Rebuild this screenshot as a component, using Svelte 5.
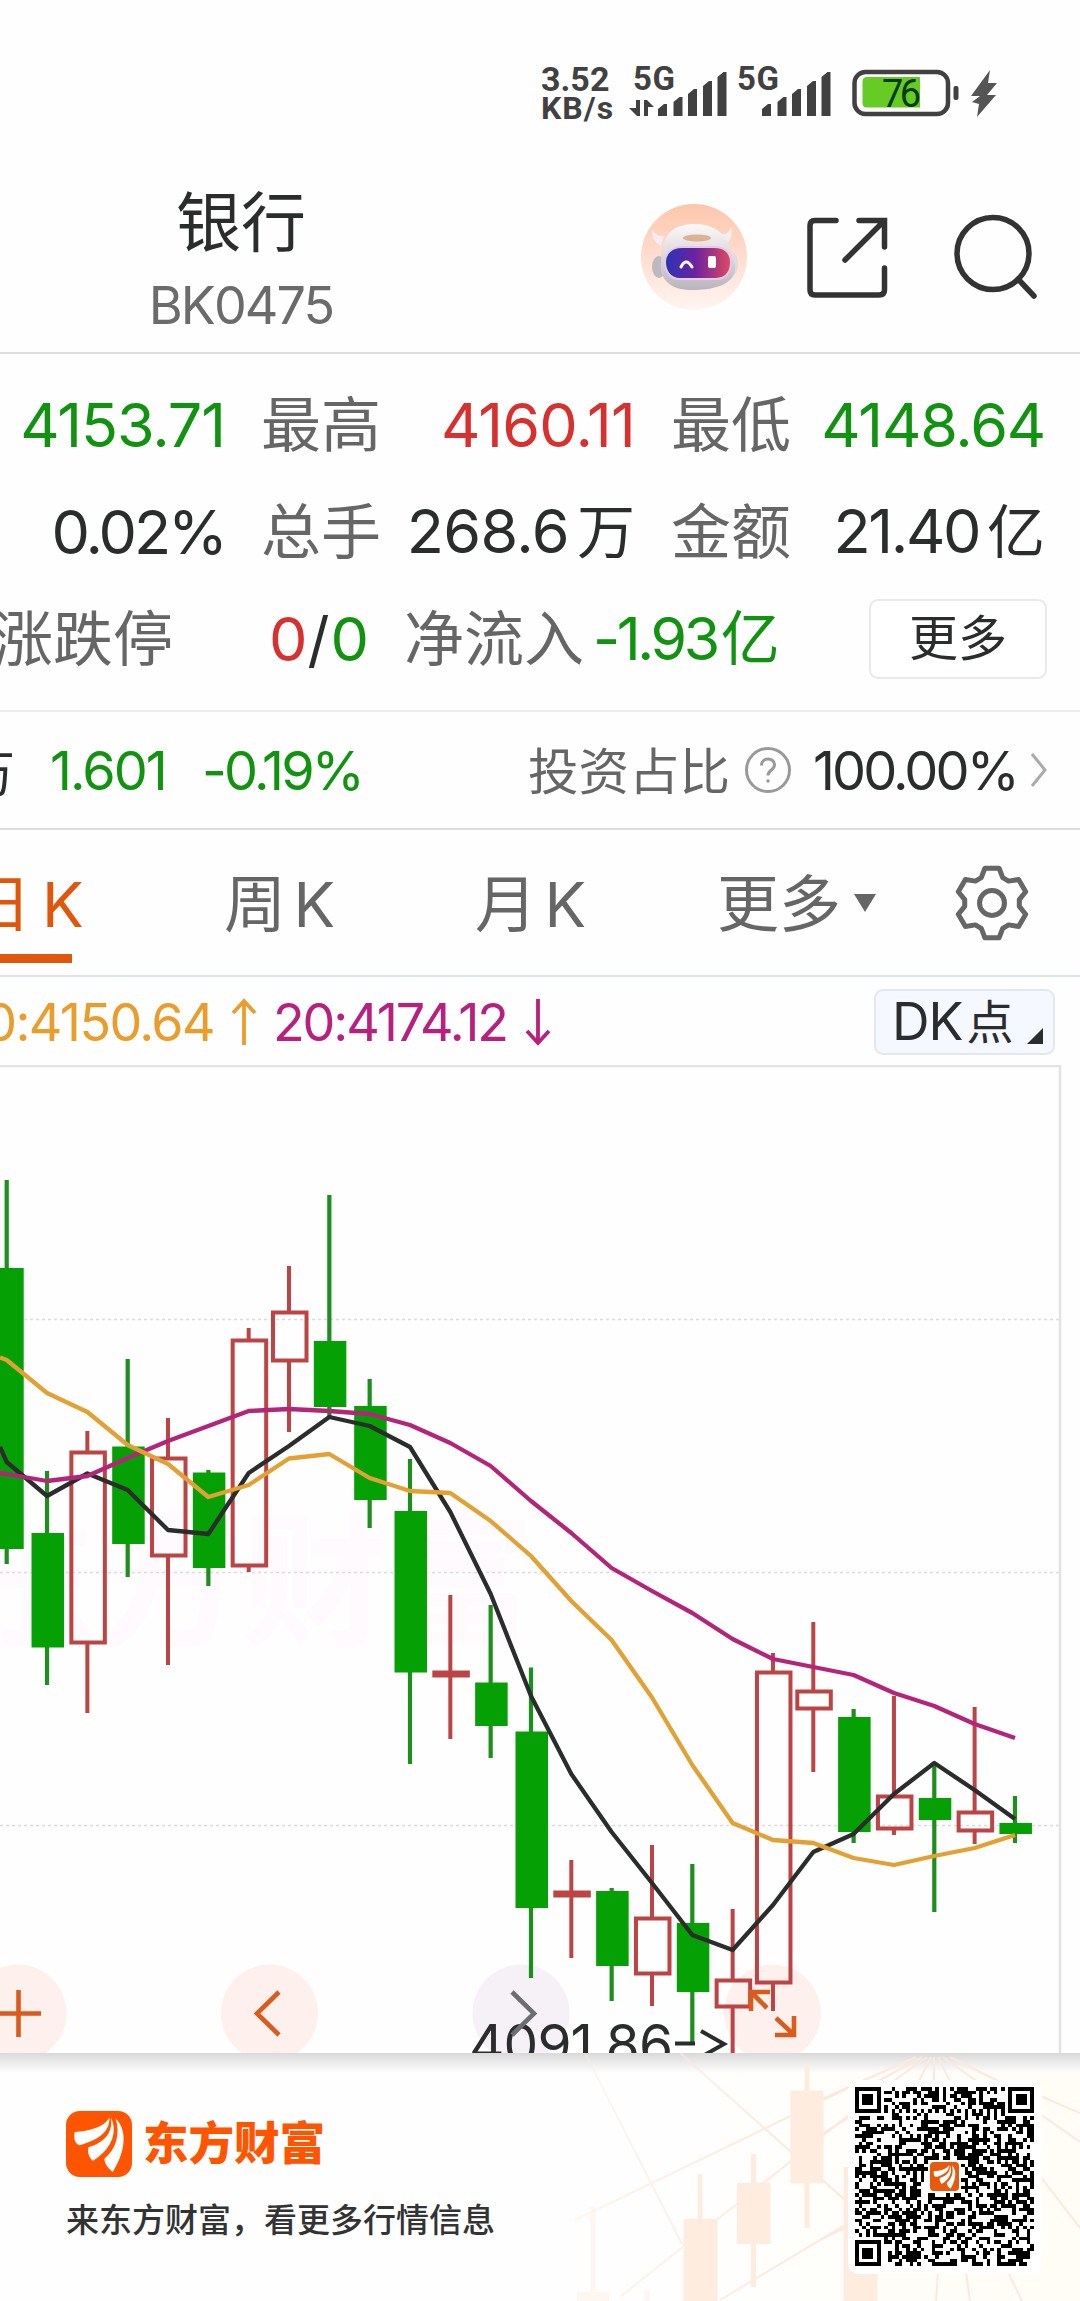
<script lang="ts">
  type Tone = 'up' | 'down' | 'plain';
  type Candle = { kind: 'up' | 'down'; high: number; top: number; bottom: number; low: number };

  // Chart drawing area starts below the indicator row
  const CHART_TOP = 1065;
  const CHART_HEIGHT = 988;
  const FIRST_X = 6.7;
  const STEP = 40.33;

  const quotes: { label?: string; value: string; unit?: string; tone: Tone; tracking: number }[] = [
    { value: '4153.71', tone: 'down', tracking: -1.1 },
    { label: '最高', value: '4160.11', tone: 'up', tracking: -0.8 },
    { label: '最低', value: '4148.64', tone: 'down', tracking: -1.2 },
    { value: '0.02%', tone: 'plain', tracking: -3 },
    { label: '总手', value: '268.6', unit: '万', tone: 'plain', tracking: -0.6 },
    { label: '金额', value: '21.40', unit: '亿', tone: 'plain', tracking: -2.4 },
  ];

  const rows: [Candle['kind'], number, number, number, number][] = [
    ['down', 1180, 1268, 1549, 1564],
    ['down', 1471, 1533, 1647.5, 1685],
    ['up', 1431, 1451, 1644, 1713],
    ['down', 1359, 1446.5, 1544, 1577],
    ['up', 1418, 1457, 1557, 1665],
    ['down', 1470, 1472.5, 1568, 1586],
    ['up', 1328, 1339, 1567, 1572],
    ['up', 1266, 1311, 1362, 1432],
    ['down', 1195, 1341, 1407, 1417],
    ['down', 1379, 1406, 1500, 1528],
    ['down', 1459, 1511, 1672.5, 1764],
    ['up', 1595, 1671, 1677, 1739],
    ['down', 1605, 1682.5, 1726, 1758],
    ['down', 1667.5, 1731.5, 1908, 1978],
    ['up', 1860, 1891, 1897, 1958],
    ['down', 1888, 1891, 1966, 2001],
    ['up', 1845, 1917, 1975, 2006],
    ['down', 1864, 1923, 1992, 2043],
    ['up', 1909, 1979, 2008, 2060],
    ['up', 1653, 1671, 1984, 2011],
    ['up', 1622, 1690, 1710, 1772],
    ['down', 1709, 1717, 1832, 1843],
    ['up', 1696, 1795, 1830, 1835],
    ['down', 1763, 1798, 1820, 1912],
    ['up', 1707, 1811, 1832, 1844],
    ['down', 1796, 1823, 1834, 1843],
  ];
  const candles: Candle[] = rows.map(([kind, high, top, bottom, low]) => ({ kind, high, top, bottom, low }));

  const ma5 = [1462, 1496, 1473.5, 1490, 1530, 1534, 1473, 1446, 1417, 1426, 1447, 1512, 1594, 1696, 1774, 1832, 1883, 1935, 1950, 1905, 1852, 1834, 1794, 1763, 1790, 1819];
  const ma10 = [1360, 1393, 1412, 1445, 1464, 1497, 1485, 1458.5, 1454, 1478, 1491, 1493, 1521, 1556, 1601, 1640, 1697.5, 1765, 1823, 1840, 1843, 1858, 1865, 1856, 1848, 1835];
  const ma20 = [1474, 1481, 1476, 1458, 1441, 1426, 1411, 1409, 1411, 1414, 1425, 1443, 1466, 1501, 1533, 1568, 1591, 1613, 1639, 1659, 1667, 1675, 1693, 1706, 1724, 1738];

  const cx = (i: number) => FIRST_X + i * STEP;
  const line = (ys: number[], start: number) =>
    `0,${start} ` + ys.map((y, i) => `${cx(i).toFixed(1)},${y}`).join(' ');

  const bars = [
    { x: 658, y: 104 },
    { x: 673.5, y: 97 },
    { x: 688, y: 89 },
    { x: 703, y: 81 },
    { x: 717.5, y: 72 },
  ];

  // QR modules as one path
  const QR = 49;
  function finder(x: number, y: number) {
    const dx = x < 8 ? x : x - (QR - 7);
    const dy = y < 8 ? y : y - (QR - 7);
    const r = Math.max(Math.abs(dx - 3), Math.abs(dy - 3));
    return r === 3 || r <= 1;
  }
  function qrPath() {
    let seed = 4153;
    let d = '';
    for (let y = 0; y < QR; y++) {
      for (let x = 0; x < QR; x++) {
        seed = (seed * 1103515245 + 12345) % 2147483648;
        let on = (seed >> 12) % 100 < 51;
        const nearX = x < 8 || x > QR - 9;
        if ((x < 8 && y < 8) || (x > QR - 9 && y < 8) || (x < 8 && y > QR - 9)) on = finder(x, y);
        else if (x === 6 || y === 6) on = (x + y) % 2 === 0;
        else if (!nearX && Math.abs(x - 24) < 5 && Math.abs(y - 24) < 5) on = false;
        if (on) d += `M${x} ${y}h1v1h-1z`;
      }
    }
    return d;
  }
  const qr = qrPath();

  // Six-toothed settings wheel
  const gear = (() => {
    const pts: string[] = [];
    for (let i = 0; i < 6; i++) {
      const a = (i * 60 - 90) * (Math.PI / 180);
      for (const [off, r] of [[-0.4, 27.5], [-0.2, 35.5], [0.2, 35.5], [0.4, 27.5]]) {
        pts.push(`${(38 + r * Math.cos(a + off)).toFixed(1)},${(38 + r * Math.sin(a + off)).toFixed(1)}`);
      }
    }
    return pts.join(' ');
  })();
</script>

{#snippet feathers()}
  <path d="M217 276C262 272 300 262 318 233C318 276 288 298 231 316C217 310 214 296 217 276Z" />
  <path d="M322 233C340 268 332 322 269 363C256 347 254 336 257 322C306 306 328 276 322 233Z" />
  <path d="M336 236C364 262 372 322 327 396C310 380 304 370 303 356C338 326 349 282 336 236Z" />
{/snippet}

<div class="screen">
  <header class="status">
    <div class="speed"><span>3.52</span><span class="per">KB/s</span></div>
    <svg class="radios" viewBox="628 60 376 64" width="376" height="64">
      {#each [0, 104] as shift}
        <text class="net" x={633 + shift} y="90" textLength="42">5G</text>
        {#each bars as bar}
          <path class="bar" d="M{bar.x + shift} 116V{bar.y + 5}L{bar.x + 6 + shift} {bar.y}H{bar.x + 9 + shift}V116Z" />
        {/each}
      {/each}
      <path class="bar" d="M636 100H640V116H637L629 108H636ZM644 116V100H647L654 107H648V116Z" />
      <rect class="shell" x="854.5" y="72" width="93.5" height="42" rx="11" />
      <path class="charge" d="M867 77H920V107.500H867Q862.500 107.500 862.500 103V81.500Q862.500 77 867 77Z" />
      <text class="level" x="882" y="107" textLength="39">76</text>
      <rect class="bar" x="953.500" y="86" width="5" height="14" rx="2" />
      <path class="bolt" d="M990 70L971 96H980L972 102L979 104L977 117L996 95H987L997 83H988Z" />
    </svg>
  </header>

  <nav class="topbar">
    <div class="title">
      <h1>银行</h1>
      <span>BK0475</span>
    </div>
    <svg class="actions" viewBox="640 200 404 114" width="404" height="114">
      <defs>
        <linearGradient id="halo" x1="0" y1="0" x2="0" y2="1">
          <stop offset="0" stop-color="#fdc6ac" />
          <stop offset="1" stop-color="#fff5f2" />
        </linearGradient>
        <linearGradient id="visor" x1="0" y1="0" x2="1" y2="0">
          <stop offset="0" stop-color="#2a35b5" />
          <stop offset=".45" stop-color="#6a22a0" />
          <stop offset="1" stop-color="#e04a60" />
        </linearGradient>
        <linearGradient id="helmet" x1="0" y1="0" x2="0" y2="1">
          <stop offset="0" stop-color="#fdf8f8" />
          <stop offset="1" stop-color="#b9b5bc" />
        </linearGradient>
      </defs>
      <circle cx="694" cy="257" r="53" fill="url(#halo)" />
      <path d="M652 229Q656 237 664 236L661 246Q651 241 652 229ZM731 227Q734 236 727 244L721 234Q729 235 731 227Z" fill="#f4ecee" />
      <ellipse cx="659" cy="267" rx="7" ry="11" fill="#bcb9c2" />
      <ellipse cx="733" cy="264" rx="5" ry="11" fill="#dedbe1" />
      <path d="M661 262C661 236 672 224 694 224C717 224 730 237 732 257C742 276 728 290 692 290C668 290 659 277 661 262Z" fill="url(#helmet)" />
      <ellipse cx="697" cy="238" rx="14" ry="3.500" fill="#deb192" />
      <path d="M682 247H714C726 247 731 254 731 262C731 272 726 279 716 279H680C670 279 665 271 665 262C665 254 671 247 682 247Z" fill="url(#visor)" stroke="#e6cbe6" stroke-width="2" />
      <path d="M681 267Q686 257 692 267" fill="none" stroke="#fff" stroke-width="3" stroke-linecap="round" />
      <rect x="708" y="256" width="8" height="12" rx="2" fill="#fff" />
      <g class="stroke">
        <path d="M836 220.500H815Q810 220.500 810 225.500V290Q810 295 815 295H879Q884.500 295 884.500 290V268" />
        <path d="M859 220.500H884.500V247M884 221L845 260" />
        <circle cx="993" cy="253.500" r="36" />
        <path d="M1018 279L1034 296" />
      </g>
    </svg>
  </nav>

  <section class="quotes">
    <div class="grid">
      {#each quotes as q}
        {#if q.label}<span class="label">{q.label}</span>{/if}
        <span class="value {q.tone}"><span style:letter-spacing="{q.tracking}px">{q.value}</span>{#if q.unit}<span class="unit">{q.unit}</span>{/if}</span>
      {/each}
    </div>
    <div class="flow-row">
      <span class="label limit">涨跌停</span>
      <span class="value limits"><span class="up">0</span><span class="slash">/</span><span class="down">0</span></span>
      <span class="label">净流入</span>
      <span class="value down inflow"><span class="tight">-1.93</span>亿</span>
      <button class="more">更多</button>
    </div>
  </section>

  <section class="index-row">
    <span class="cut">万</span>
    <span class="down price">1.601</span>
    <span class="down change">-0.19%</span>
    <span class="ratio-label">投资占比</span>
    <svg class="help" viewBox="0 0 48 48" width="48" height="48">
      <circle cx="24" cy="24" r="21.500" />
      <path d="M17.500 19.500C17.500 11 30.500 11 30.500 19C30.500 24 24 24 24 29.500" />
      <circle class="dot" cx="24" cy="35" r="1.800" />
    </svg>
    <span class="ratio">100.00%</span>
    <svg class="chevron" viewBox="0 0 18 36" width="18" height="36"><path d="M2 2L15 18L2 34" /></svg>
  </section>

  <nav class="tabs">
    <span class="tab active">日K</span>
    <span class="tab week">周K</span>
    <span class="tab month">月K</span>
    <span class="tab others">更多</span>
    <svg class="caret" viewBox="0 0 22 18" width="22" height="18"><path d="M0 0H22L11 18Z" /></svg>
    <svg class="gear" viewBox="0 0 76 76" width="76" height="76">
      <polygon points={gear} />
      <circle cx="38" cy="38" r="12.500" />
    </svg>
  </nav>

  <div class="averages">
    <span class="ma10">0:4150.64</span>
    <svg viewBox="0 0 26 48" width="26" height="48" class="arrow ma10"><path d="M13 47V3M2 15L13 3L24 15" /></svg>
    <span class="ma20">20:4174.12</span>
    <svg viewBox="0 0 26 48" width="26" height="48" class="arrow ma20"><path d="M13 1V45M2 33L13 45L24 33" /></svg>
    <button class="dk"><span>DK</span>点<i></i></button>
  </div>

  <svg class="chart" viewBox="0 {CHART_TOP} 1080 {CHART_HEIGHT}" width="1080" height={CHART_HEIGHT}>
    <text class="watermark" x="-50" y="1634">东方财富</text>
    {#each [1319.5, 1572.5, 1825.5] as y}
      <line class="rule" x1="0" x2="1060" y1={y} y2={y} />
    {/each}
    <path class="frame" d="M0 1066H1060V2053" />
    <circle class="pad" cx="18" cy="2013" r="48.500" />
    <circle class="pad" cx="269.500" cy="2013" r="48.500" />
    <circle class="pad muted" cx="521" cy="2013" r="48.500" />
    <circle class="pad" cx="772.500" cy="2013" r="48.500" />
    {#each candles as c, i}
      <g class={c.kind}>
        {#if c.kind === 'down'}
          <line x1={cx(i)} x2={cx(i)} y1={c.high} y2={c.low} />
          <rect x={cx(i) - 15.5} y={c.top} width="32.500" height={c.bottom - c.top} />
        {:else}
          <line x1={cx(i)} x2={cx(i)} y1={c.high} y2={c.top} />
          <line x1={cx(i)} x2={cx(i)} y1={c.bottom} y2={c.low} />
          <rect x={cx(i) - 16} y={c.top + 1.5} width="33.500" height={c.bottom - c.top - 3} />
        {/if}
      </g>
    {/each}
    <polyline class="curve c5" points={line(ma5, 1447)} />
    <polyline class="curve c20" points={line(ma20, 1473)} />
    <polyline class="curve c10" points={line(ma10, 1357.5)} />
    <text class="low" x="469" y="2064" textLength="204">4091.86</text>
    <path class="pointer" d="M675 2043.500H695M701 2031L724 2044L701 2057" />
    <path class="tool" d="M-6 2013.500H41M18.500 1990V2037M279 1992L257 2013.500L279 2035" />
    <path class="tool muted" d="M512 1992L534 2013.500L512 2035" />
    <path class="tool" d="M770 1992H751V2011M752 1993L767 2008M776 2018L793 2034M794 2016V2035H775" />
  </svg>

  <footer>
    <svg class="backdrop" viewBox="540 2053 540 248" width="540" height="248">
      <defs>
        <linearGradient id="glow" x1="0" y1="0" x2="1" y2="0">
          <stop offset=".3" stop-color="#fffdf6" stop-opacity="0" />
          <stop offset=".8" stop-color="#fffdf6" />
        </linearGradient>
        <linearGradient id="fade" x1="540" y1="0" x2="800" y2="0" gradientUnits="userSpaceOnUse">
          <stop offset="0" stop-color="#fde9dc" stop-opacity=".25" />
          <stop offset="1" stop-color="#fde9dc" />
        </linearGradient>
      </defs>
      <rect x="540" y="2073" width="540" height="228" fill="url(#glow)" />
      <g class="rays">
        <path d="M585 2053L682 2244M680 2053L790 2151L845 2200M575 2220L700 2160L850 2087M620 2297L680 2249L790 2162L850 2114M720 2300L850 2222" />
        <path d="M916 2057L820 2100M922 2057L862 2090M927 2057L888 2085M931 2057L917 2085M934 2057V2085M938 2057L952 2085M943 2057L982 2085M950 2057L1016 2090M1040 2096L1080 2113M1040 2114L1080 2142M1040 2176L1080 2228M820 2135L848 2118M820 2240L848 2226" />
        <path d="M938 2272L936 2301M966 2272L970 2301M1008 2272L1022 2301" />
      </g>
      <g class="sticks">
        <path class="thin" opacity=".4" d="M593 2207V2292M647 2290V2301" />
        <rect opacity=".4" x="577" y="2292" width="32" height="9" />
        <path class="thin" d="M700 2174V2220M753.500 2154V2287M807 2064V2228" />
        <rect x="683.500" y="2219" width="34" height="82" />
        <rect x="737" y="2183" width="33.500" height="61" />
        <rect x="790.500" y="2090.500" width="33" height="93" />
        <rect x="843.500" y="2167" width="34" height="134" />
      </g>
    </svg>
    <div class="brand">
      <div class="brand-name">
        <svg viewBox="192 213 191 198" preserveAspectRatio="none" width="66" height="66">{@render feathers()}</svg>
        <strong>东方财富</strong>
      </div>
      <p>来东方财富，看更多行情信息</p>
    </div>
    <div class="qr">
      <svg viewBox="0 0 {QR} {QR}" width="179" height="179" shape-rendering="crispEdges"><path d={qr} /></svg>
      <svg class="qr-logo" viewBox="192 213 191 198" preserveAspectRatio="none" width="29" height="29">{@render feathers()}</svg>
    </div>
  </footer>
</div>

<style>
  :global(body) {
    margin: 0;
    background: #fff;
  }

  .screen {
    width: 1080px;
    height: 2301px;
    overflow: hidden;
    background: #fefefe;
    color: #2b2d2d;
    font-family: Inter, 'Noto Sans CJK SC', sans-serif;
    display: flex;
    flex-direction: column;
  }

  svg {
    display: block;
    flex: none;
  }

  .status {
    height: 124px;
    display: flex;
    align-items: flex-end;
    padding-left: 541px;
    box-sizing: border-box;
    flex: none;
    font-family: Roboto, sans-serif;
  }

  .speed {
    width: 87px;
    height: 64px;
    display: flex;
    flex-direction: column;
    padding-top: 2px;
    font-size: 34px;
    font-weight: 700;
    line-height: 34px;
    color: #414141;
    box-sizing: border-box;
  }

  .speed .per {
    font-size: 32px;
    line-height: 24px;
    letter-spacing: 1px;
  }

  .radios {
    overflow: visible;
  }

  .net {
    font-size: 33px;
    font-weight: 700;
    fill: #414141;
  }

  .bar {
    fill: #414141;
  }

  .bolt {
    fill: #555;
  }

  .shell {
    fill: none;
    stroke: #414141;
    stroke-width: 4.5;
  }

  .charge {
    fill: #66cb25;
  }

  .level {
    font-size: 38px;
    fill: #0a3a05;
  }

  .topbar {
    height: 230px;
    flex: none;
    box-sizing: border-box;
    border-bottom: 2px solid #dedede;
    display: flex;
    align-items: flex-start;
    padding-top: 58px;
  }

  .title {
    width: 482px;
    margin-right: 158px;
    display: flex;
    flex-direction: column;
    align-items: center;
  }

  h1 {
    margin: 0;
    font-size: 65px;
    font-weight: 400;
    line-height: 82px;
  }

  .title span {
    font-size: 52px;
    line-height: 84px;
    color: #6b6b6b;
    letter-spacing: -1.9px;
  }

  .actions {
    margin-top: 18px;
  }

  .stroke {
    fill: none;
    stroke: #333;
    stroke-width: 5.5;
    stroke-linecap: round;
  }

  .quotes {
    height: 358px;
    flex: none;
    box-sizing: border-box;
    border-bottom: 2px solid #ededf0;
    padding-top: 17px;
  }

  .grid {
    display: grid;
    grid-template-columns: 225px 156px 254px 156px 254px;
    grid-auto-rows: 107px;
    align-items: center;
  }

  .grid .label {
    padding-left: 36px;
  }

  .label {
    font-size: 60px;
    line-height: 80px;
    color: #666;
    white-space: nowrap;
  }

  .value {
    font-size: 61px;
    line-height: 80px;
    text-align: right;
    white-space: nowrap;
  }

  .unit {
    font-size: 58px;
    margin-left: 8px;
  }

  .up {
    color: #d8302f;
  }

  .down {
    color: #109410;
  }

  .flow-row {
    height: 107px;
    display: flex;
    align-items: center;
  }

  .limit {
    margin-left: -7px;
  }

  .limits {
    width: 196px;
    margin-right: 35px;
  }

  .slash {
    margin-right: 1px;
  }

  .inflow {
    margin-left: 9px;
    width: 187px;
    text-align: left;
    font-size: 59px;
  }

  .tight {
    letter-spacing: -3.4px;
    margin-right: 4px;
  }

  button {
    font-family: inherit;
    padding: 0;
    color: #2b2d2d;
    box-sizing: border-box;
  }

  .more {
    margin-left: 89px;
    width: 178px;
    height: 80px;
    border: 2px solid #e9e9ec;
    border-radius: 9px;
    background: #fff;
    font-size: 49px;
    line-height: 74px;
  }

  .index-row {
    height: 118px;
    flex: none;
    box-sizing: border-box;
    border-bottom: 2px solid #dcdee1;
    display: flex;
    align-items: center;
    font-size: 54px;
    white-space: nowrap;
  }

  .cut {
    font-size: 50px;
    width: 50px;
    margin-left: -35px;
  }

  .price {
    width: 115px;
    margin-left: 35px;
    letter-spacing: -2px;
  }

  .change {
    margin-left: 37px;
    width: 326px;
    letter-spacing: -2.8px;
  }

  .ratio-label {
    font-size: 50.5px;
    width: 202px;
    margin-top: -4px;
    color: #666;
  }

  .help {
    margin-left: 14px;
    fill: none;
    stroke: #999;
    stroke-width: 3;
  }

  .help .dot {
    fill: #999;
    stroke: none;
  }

  .ratio {
    margin-left: 21px;
    width: 217px;
    letter-spacing: -2.9px;
  }

  .chevron {
    fill: none;
    stroke: #aaa;
    stroke-width: 3;
  }

  .tabs {
    height: 147px;
    flex: none;
    box-sizing: border-box;
    border-bottom: 2px solid #dfe4e9;
    display: flex;
    align-items: center;
    color: #666;
  }

  .tab {
    font-size: 62px;
    line-height: 80px;
    height: 147px;
    padding-top: 36px;
    box-sizing: border-box;
    white-space: nowrap;
    letter-spacing: 7.5px;
  }

  .active {
    width: 103px;
    margin-left: -31px;
    color: #e0560b;
    letter-spacing: 11px;
    background: linear-gradient(#e0560b, #e0560b) 0 125px / 103px 9px no-repeat;
  }

  .week {
    margin-left: 152px;
    width: 251px;
  }

  .month {
    width: 242px;
  }

  .others {
    width: 124px;
    letter-spacing: 0;
  }

  .caret {
    margin-left: 13px;
    fill: #666;
  }

  .gear {
    margin-left: 78px;
    fill: none;
    stroke: #666;
    stroke-width: 5;
    stroke-linejoin: round;
  }

  .averages {
    height: 88px;
    flex: none;
    display: flex;
    align-items: center;
    padding-top: 2px;
    box-sizing: border-box;
    font-size: 52px;
    white-space: nowrap;
  }

  .averages span.ma10 {
    width: 234px;
    margin-left: -20px;
    text-align: right;
    letter-spacing: -1.6px;
  }

  .averages span.ma20 {
    width: 252px;
    margin-left: 16px;
    letter-spacing: -2.1px;
  }

  .ma10 {
    color: #eb9d2b;
  }

  .ma20 {
    color: #b91f7c;
  }

  .arrow {
    flex: none;
    fill: none;
    stroke: currentColor;
    stroke-width: 3.8;
  }

  .arrow.ma10 {
    margin-left: 17px;
  }

  .dk {
    margin-left: 323px;
    width: 181px;
    height: 66px;
    border: 2px solid #e3e7ef;
    border-radius: 9px;
    background: #f5f8fe;
    display: flex;
    align-items: center;
    padding-left: 16px;
    font-size: 47px;
    line-height: 60px;
  }

  .arrow.ma20 {
    margin-left: 0;
  }

  .dk span {
    font-size: 52px;
    margin-right: 4px;
    letter-spacing: -1px;
  }

  .dk i {
    width: 0;
    height: 0;
    margin: 28px 0 0 14px;
    border-left: 16px solid transparent;
    border-bottom: 16px solid #2b2d2d;
  }

  .watermark {
    font-size: 146px;
    font-weight: 700;
    fill: #fefafe;
  }

  .rule {
    stroke: #dcdce0;
    stroke-width: 1.5;
    stroke-dasharray: 3 3;
  }

  .frame {
    fill: none;
    stroke: #e3e3e3;
    stroke-width: 2.5;
  }

  .pad {
    fill: #fef1ed;
  }

  .pad.muted {
    fill: #f5f1f6;
  }

  .chart .down line {
    stroke: #1d8f1d;
    stroke-width: 4.2;
  }

  .chart .down rect {
    fill: #04a004;
  }

  .chart .up line,
  .chart .up rect {
    fill: none;
    stroke: #bd4444;
    stroke-width: 4;
  }

  .curve {
    fill: none;
    stroke-width: 4.3;
    stroke-linejoin: round;
  }

  .c5 {
    stroke: #2b2d2d;
  }

  .c10 {
    stroke: #e3a033;
  }

  .c20 {
    stroke: #b42579;
  }

  .low {
    font-size: 55px;
    fill: #2b2d2d;
  }

  .pointer {
    fill: none;
    stroke: #2b2d2d;
    stroke-width: 4;
  }

  .tool {
    fill: none;
    stroke: #da5b1c;
    stroke-width: 4.6;
  }

  .tool.muted {
    stroke: #6e6e72;
  }

  footer {
    position: relative;
    height: 248px;
    flex: none;
    box-sizing: border-box;
    padding: 27px 38px 0 66px;
    display: flex;
    justify-content: space-between;
    background: linear-gradient(#d9d9d9, #f3f3f3 14px, #fefefe 20px);
  }

  .backdrop {
    position: absolute;
    right: 0;
    top: 0;
  }

  .rays {
    fill: none;
    stroke: url(#fade);
    stroke-width: 2;
  }

  .sticks {
    fill: #feeddf;
  }

  .thin {
    fill: none;
    stroke: #feeddf;
    stroke-width: 5;
  }

  .brand {
    padding-top: 31px;
  }

  .brand-name {
    display: flex;
    align-items: center;
    gap: 11px;
    height: 66px;
  }

  .brand-name svg {
    background: #ff5500;
    border-radius: 14px;
    fill: #fff;
  }

  strong {
    font-size: 45.5px;
    font-weight: 900;
    line-height: 62px;
    color: #ff5500;
  }

  p {
    margin: 19px 0 0;
    font-size: 33px;
    font-weight: 500;
    line-height: 48px;
    color: #333;
  }

  .qr {
    position: relative;
    width: 194px;
    height: 194px;
    box-sizing: border-box;
    padding: 7px;
    border-radius: 10px;
    background: #fff;
  }

  .qr-logo {
    position: absolute;
    left: 82px;
    top: 82px;
    background: #e8590c;
    border-radius: 4px;
    fill: #fff;
  }
</style>
